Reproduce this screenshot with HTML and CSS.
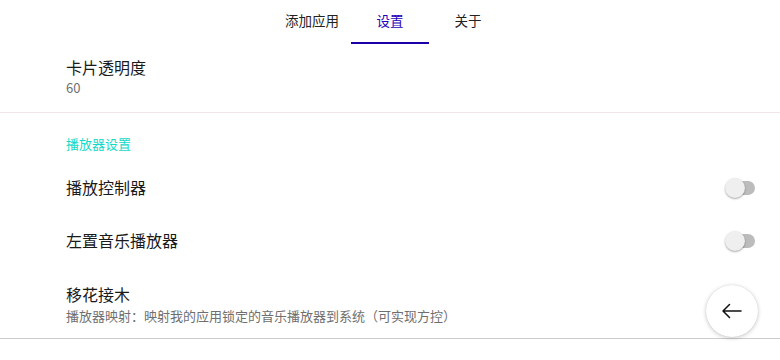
FILE: index.html
```html
<!DOCTYPE html>
<html lang="zh">
<head>
<meta charset="utf-8">
<link rel="stylesheet" href="styles.css">
</head>
<body>
<div class="page">
  <nav class="tabs">
    <div class="tab">添加应用</div>
    <div class="tab active">设置</div>
    <div class="tab">关于</div>
  </nav>
  <div class="item first">
    <div class="title">卡片透明度</div>
    <div class="sub">60</div>
  </div>
  <div class="divider pink"></div>
  <div class="category">播放器设置</div>
  <div class="row">
    <div class="title">播放控制器</div>
    <div class="switch"><span class="track"></span><span class="thumb"></span></div>
  </div>
  <div class="row">
    <div class="title">左置音乐播放器</div>
    <div class="switch"><span class="track"></span><span class="thumb"></span></div>
  </div>
  <div class="item last">
    <div class="title">移花接木</div>
    <div class="sub">播放器映射：映射我的应用锁定的音乐播放器到系统（可实现方控）</div>
  </div>
  <div class="divider gray"></div>
  <button class="fab" aria-label="back">
    <svg width="24" height="24" viewBox="0 0 24 24"><path d="M21 12H3.5M9.5 5.5L3 12l6.5 6.5" fill="none" stroke="#111" stroke-width="1.5" stroke-linecap="round" stroke-linejoin="round"/></svg>
  </button>
</div>
</body>
</html>
```

FILE: styles.css
```css
* { box-sizing: border-box; }
html, body { margin: 0; padding: 0; background: #fff; }
body {
  font-family: "Noto Sans CJK SC", "Noto Sans", sans-serif;
  color: #1e1e1e;
  width: 780px;
  height: 360px;
  overflow: hidden;
}
.page { position: relative; width: 780px; height: 360px; }
.tabs {
  display: flex;
  justify-content: center;
  height: 44px;
}
.tab {
  width: 78px;
  height: 44px;
  display: flex;
  align-items: center;
  justify-content: center;
  padding-bottom: 2px;
  font-size: 13.5px;
  color: #222;
  border-bottom: 2px solid transparent;
}
.tab.active {
  color: #2400b8;
  border-bottom-color: #1a00a8;
}
.title {
  font-size: 16px;
  line-height: 20px;
  color: #1a1a1a;
}
.sub {
  font-size: 13px;
  line-height: 18px;
  color: #6f6f6f;
}
.item { padding-left: 66px; }
.item.first { padding-top: 13px; padding-bottom: 15px; }
.item.first .sub { margin-top: 2px; }
.item.last { padding-top: 18px; padding-bottom: 13px; }
.item.last .sub { margin-top: 3px; }
.divider { height: 1px; }
.divider.pink { background: #f0e6ea; }
.divider.gray { background: #cccccc; }
.category {
  margin-top: 22px;
  padding-left: 66px;
  font-size: 13px;
  line-height: 18px;
  color: #14d9c8;
}
.row {
  height: 53px;
  display: flex;
  align-items: center;
  justify-content: space-between;
  padding-left: 66px;
  padding-right: 25px;
}
.category + .row { margin-top: 7px; }
.switch {
  position: relative;
  width: 30px;
  height: 20px;
  margin-top: 2px;
}
.track {
  position: absolute;
  left: 3px;
  top: 3px;
  width: 27px;
  height: 14px;
  border-radius: 7px;
  background: #bcbcbc;
}
.thumb {
  position: absolute;
  left: 0;
  top: 0;
  width: 20px;
  height: 20px;
  border-radius: 50%;
  background: #efefef;
  box-shadow: 0 1px 2px rgba(0,0,0,0.35);
}
.fab {
  position: absolute;
  left: 706px;
  top: 285px;
  width: 52px;
  height: 52px;
  border-radius: 50%;
  border: none;
  background: #fff;
  box-shadow: 0 1px 4px rgba(0,0,0,0.22), 0 0 1px rgba(0,0,0,0.15);
  display: flex;
  align-items: center;
  justify-content: center;
  padding: 0;
}
```
